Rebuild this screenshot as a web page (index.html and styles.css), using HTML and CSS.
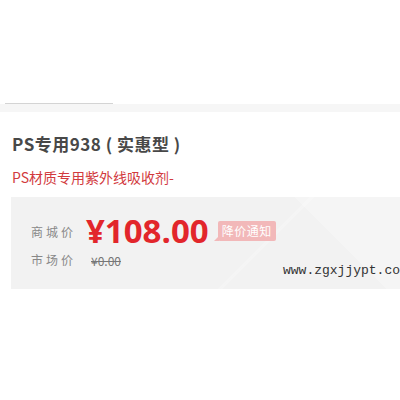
FILE: index.html
```html
<!DOCTYPE html>
<html lang="zh-CN">
  <head>
    <meta charset="UTF-8" />
    <meta name="viewport" content="width=device-width, initial-scale=1.0" />
    <title>PS专用938</title>
    <link rel="stylesheet" href="styles.css">
  </head>
  <body>
    <div class="tab-bar">
      <div class="tab-line"></div>
      <div class="tab-band"></div>
    </div>
    <div class="product">
      <h1 class="title">PS专用938 ( 实惠型 )</h1>
      <p class="subtitle">PS材质专用紫外线吸收剂-</p>
      <div class="price-box">
        <div class="price-row">
          <span class="label">商城价</span>
          <span class="price">¥108.00</span>
          <span class="notify">降价通知</span>
        </div>
        <div class="price-row market">
          <span class="label">市场价</span>
          <span class="old-price">¥0.00</span>
        </div>
        <div class="watermark">www.zgxjjypt.co</div>
      </div>
    </div>
  </body>
</html>
```

FILE: styles.css
```css
body {
  margin: 0;
  background: #fff;
  font-family: "Noto Sans CJK SC", "Noto Sans", sans-serif;
  overflow: hidden;
}

.tab-bar {
  padding-top: 103px;
}
.tab-line {
  width: 108px;
  height: 1px;
  margin-left: 5px;
  background: #d4d4d4;
}
.tab-band {
  height: 8px;
  background: #f6f6f6;
}

.product {
  padding-left: 11px;
}

.title {
  margin: 20px 0 0 1px;
  font-size: 17px;
  line-height: 23px;
  font-weight: bold;
  letter-spacing: 0.5px;
  color: #484848;
}

.subtitle {
  margin: 12px 0 0 1px;
  font-size: 14px;
  line-height: 20px;
  color: #d23a3e;
}

.price-box {
  position: relative;
  margin-top: 10px;
  height: 92px;
  padding: 16px 0 0 20px;
  box-sizing: border-box;
  background:
    linear-gradient(135deg, transparent 62%, rgba(255, 255, 255, 0.2) 62%, rgba(255, 255, 255, 0.2) 63%, transparent 63%),
    linear-gradient(45deg, transparent 78%, rgba(255, 255, 255, 0.25) 78%),
    #f2f2f2;
}

.price-row {
  display: flex;
  align-items: center;
}

.label {
  width: 55px;
  font-size: 12px;
  letter-spacing: 3px;
  color: #888;
}

.price {
  font-family: "Open Sans", "Noto Sans", sans-serif;
  font-size: 33px;
  line-height: 36px;
  font-weight: bold;
  color: #e2262b;
}

.notify {
  position: relative;
  margin-left: 9px;
  padding: 0 4px;
  font-size: 12px;
  line-height: 20px;
  letter-spacing: 0.5px;
  color: #fff;
  background: #f2b8b9;
  border-radius: 2px;
}
.notify::before {
  content: "";
  position: absolute;
  left: -4px;
  bottom: 0;
  border-bottom: 5px solid #f2b8b9;
  border-left: 5px solid transparent;
}

.market {
  margin-top: 1px;
}
.market .label {
  line-height: 20px;
}

.old-price {
  margin-left: 5px;
  font-size: 12px;
  color: #777;
  text-decoration: line-through;
}

.watermark {
  position: absolute;
  left: 272px;
  top: 66px;
  font-family: "Liberation Mono", monospace;
  font-size: 13px;
  color: #333;
  white-space: nowrap;
}
```
